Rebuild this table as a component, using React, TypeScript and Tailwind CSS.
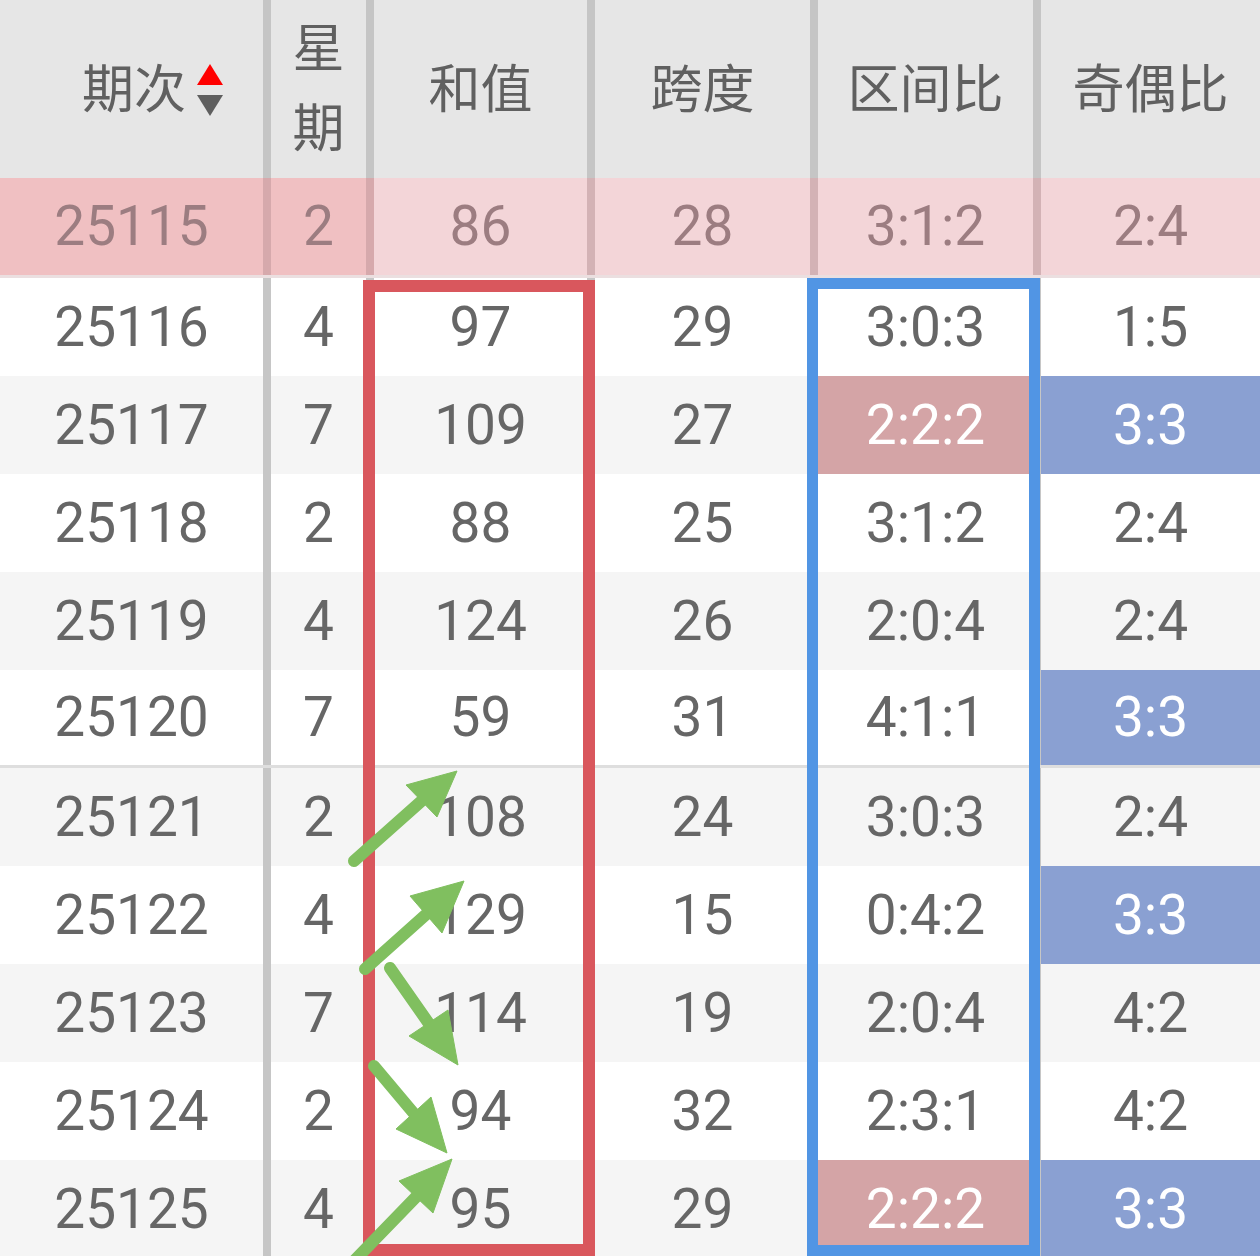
import React from 'react';

type Row = [string, string, string, string, string, string];

const rows: Row[] = [
  ['25116', '4', '97', '29', '3:0:3', '1:5'],
  ['25117', '7', '109', '27', '2:2:2', '3:3'],
  ['25118', '2', '88', '25', '3:1:2', '2:4'],
  ['25119', '4', '124', '26', '2:0:4', '2:4'],
  ['25120', '7', '59', '31', '4:1:1', '3:3'],
  ['25121', '2', '108', '24', '3:0:3', '2:4'],
  ['25122', '4', '129', '15', '0:4:2', '3:3'],
  ['25123', '7', '114', '19', '2:0:4', '4:2'],
  ['25124', '2', '94', '32', '2:3:1', '4:2'],
  ['25125', '4', '95', '29', '2:2:2', '3:3'],
];

const cols = 'grid grid-cols-[271px_103px_221px_223px_223px_219px]';
const font = { fontFamily: 'Roboto, "Noto Sans CJK SC", sans-serif' };

// tail, tip, head base a, head base b
const arrows: number[][] = [
  [354, 861, 457, 771, 406, 785, 437, 817],
  [365, 969, 464, 881, 410, 896, 442, 933],
  [390, 968, 458, 1065, 409, 1036, 448, 1010],
  [374, 1066, 447, 1153, 396, 1129, 431, 1097],
  [355, 1260, 452, 1159, 399, 1181, 433, 1213],
];

const SortIcon = () => (
  <svg width="26" height="54" viewBox="0 0 26 54" className="ml-[11px]">
    <polygon points="13,0 26,21 0,21" fill="#ff0000" />
    <polygon points="0,31 26,31 13,52" fill="#5f5f5f" />
  </svg>
);

export default function App() {
  return (
    <div className="relative w-[1260px] h-[1256px] overflow-hidden bg-white" style={font}>
      {/* Header */}
      <div className={`${cols} h-[178px] bg-[#e6e6e6] text-[#606060] text-[52px] leading-none`}>
        <div className="flex items-center pl-[82px] pt-[4px] border-r-8 border-[#c5c5c5]">
          <span>期次</span>
          <SortIcon />
        </div>
        <div className="flex flex-col items-center justify-center gap-[28px] pt-[2px] border-r-8 border-[#c5c5c5]">
          <span>星</span>
          <span>期</span>
        </div>
        <div className="flex items-center justify-center pt-[4px] border-r-8 border-[#c5c5c5]">和值</div>
        <div className="flex items-center justify-center pt-[4px] border-r-8 border-[#c5c5c5]">跨度</div>
        <div className="flex items-center justify-center pt-[4px] border-r-8 border-[#c5c5c5]">区间比</div>
        <div className="flex items-center justify-center pt-[4px]">奇偶比</div>
      </div>

      {/* Current issue row */}
      <div className={`${cols} h-[100px] border-b-[3px] border-[#ebdfe0] text-[55px] leading-none text-[#9c7d81]`}>
        <div className="flex items-center justify-center bg-[#f0c0c2] border-r-8 border-[#d6a9ac]">25115</div>
        <div className="flex items-center justify-center bg-[#f0c0c2] border-r-8 border-[#d6a9ac]">2</div>
        <div className="flex items-center justify-center bg-[#f3d5d8] border-r-8 border-[#d3b2b5]">86</div>
        <div className="flex items-center justify-center bg-[#f3d5d8] border-r-8 border-[#d3b2b5]">28</div>
        <div className="flex items-center justify-center bg-[#f3d5d8] border-r-8 border-[#d3b2b5]">3:1:2</div>
        <div className="flex items-center justify-center bg-[#f3d5d8]">2:4</div>
      </div>

      {/* Body */}
      {rows.map((r, i) => {
        const bg = i % 2 === 0 ? 'bg-white' : 'bg-[#f5f5f5]';
        const sep = r[0] === '25120' ? 'border-b-[3px] border-[#dedede]' : '';
        const zone = r[4] === '2:2:2';
        const odd = r[5] === '3:3';
        return (
          <div key={r[0]} className={`${cols} h-[98px] ${bg} ${sep} text-[55px] leading-none text-[#666666]`}>
            <div className="flex items-center justify-center border-r-8 border-[#c6c6c6]">{r[0]}</div>
            <div className="flex items-center justify-center border-r-8 border-[#c6c6c6]">{r[1]}</div>
            <div className="flex items-center justify-center border-r-8 border-[#c6c6c6]">{r[2]}</div>
            <div className="flex items-center justify-center border-r-8 border-[#c6c6c6]">{r[3]}</div>
            <div
              className={`flex items-center justify-center border-r-8 border-[#c6c6c6] ${
                zone ? 'bg-[#d4a4a6] text-white' : ''
              }`}
            >
              {r[4]}
            </div>
            <div className={`flex items-center justify-center ${odd ? 'bg-[#8aa0d2] text-white' : ''}`}>{r[5]}</div>
          </div>
        );
      })}

      {/* Marker boxes */}
      <div className="absolute left-[363px] top-[280px] w-[232px] h-[976px] border-[12px] border-[#d9575d]" />
      <div className="absolute left-[807px] top-[278px] w-[233px] h-[978px] border-[11px] border-[#5195e4]" />

      {/* Trend arrows */}
      <svg className="absolute left-0 top-0 pointer-events-none" width="1260" height="1256">
        {arrows.map((a, i) => {
          const mx = (a[4] + a[6]) / 2;
          const my = (a[5] + a[7]) / 2;
          return (
            <g key={i} fill="#80bf5f" stroke="#80bf5f">
              <line x1={a[0]} y1={a[1]} x2={mx} y2={my} strokeWidth="12" strokeLinecap="round" />
              <polygon points={`${a[2]},${a[3]} ${a[4]},${a[5]} ${a[6]},${a[7]}`} strokeWidth="1" strokeLinejoin="round" />
            </g>
          );
        })}
      </svg>
    </div>
  );
}
